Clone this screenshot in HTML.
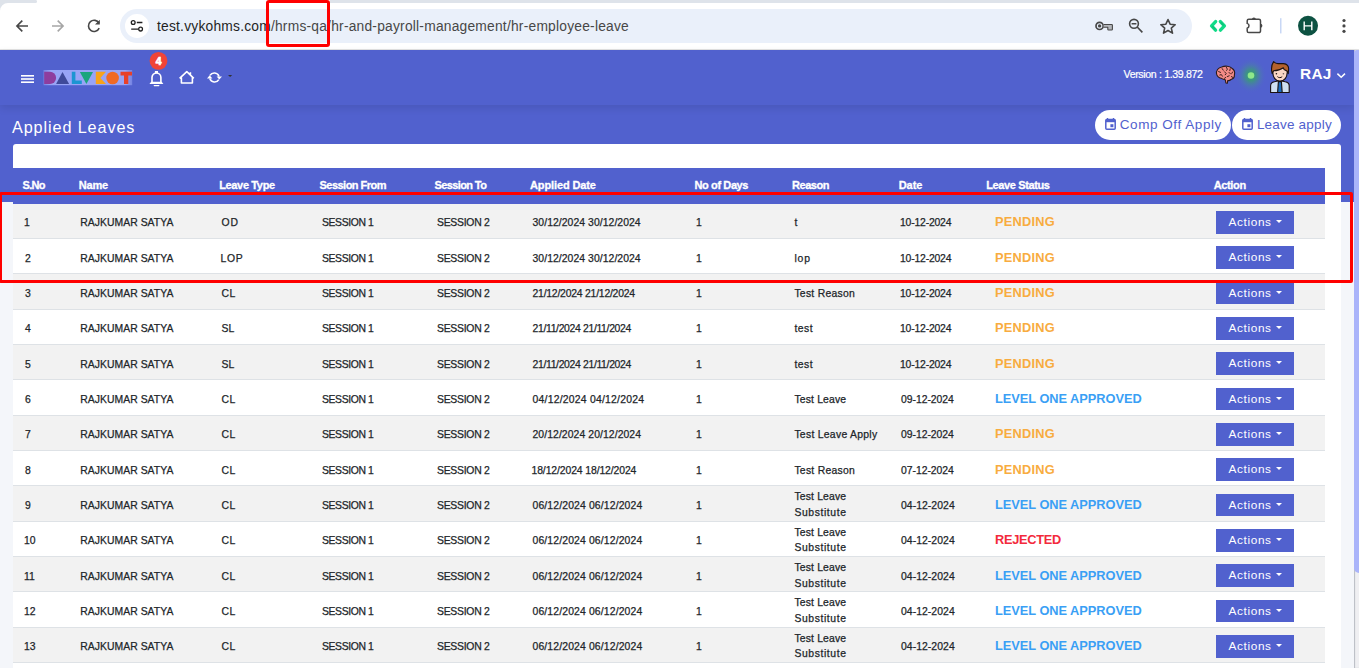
<!DOCTYPE html>
<html><head><meta charset="utf-8">
<style>
*{box-sizing:border-box;margin:0;padding:0}
html,body{width:1359px;height:668px;overflow:hidden;background:#fff;font-family:"Liberation Sans",sans-serif}
body{position:relative}
div,span,svg{position:absolute}
span{white-space:nowrap;line-height:20px}
.h{font-size:11px;font-weight:700;color:#fff;-webkit-text-stroke:.3px #fff}
.c{font-size:10.4px;color:#212529;-webkit-text-stroke:.25px #212529}
.s{font-size:12.8px;font-weight:700}
.b{font-size:11.8px;color:#fff}
.row{left:13px;width:1312px;height:35.33px;border-top:1px solid #dee2e6}
.btn{left:1216px;width:78px;height:22.8px;background:#5161ce}
.caret{left:1276px;width:0;height:0;border-left:3px solid transparent;border-right:3px solid transparent;border-top:3.2px solid #fff}
.redbox{border:3px solid #ff0000;border-radius:3px}
.pill{top:109.9px;height:29.8px;border-radius:15px;background:#fff;color:#5161ce;font-size:13.5px;line-height:29.8px;white-space:nowrap}
</style></head><body>
<div style="left:0;top:0;width:1359px;height:50px;background:#fff"></div>
<svg style="left:0;top:0" width="40" height="12" viewBox="0 0 40 12"><path d="M0 0H36A1.6 1.6 0 0 1 36 3H8A8 8 0 0 0 0 11Z" fill="#dee3ea"/></svg>
<div style="left:330px;top:0;width:1029px;height:3px;background:#dee3ea"></div>
<div style="left:120px;top:9px;width:1072px;height:34px;border-radius:17px;background:#eaf0fa"></div>
<div style="left:125px;top:14px;width:23.8px;height:23.8px;border-radius:50%;background:#fff"></div>
<svg style="position:absolute;left:0;top:0" width="1359" height="50" viewBox="0 0 1359 50">
  <g fill="none" stroke="#474747" stroke-width="1.6" stroke-linecap="butt">
    <path d="M28 26H17.5M22.3 20.6L16.9 26L22.3 31.4"/>
  </g>
  <g fill="none" stroke="#a6a6a6" stroke-width="1.6">
    <path d="M52 26H62.5M57.7 20.6L63.1 26L57.7 31.4"/>
  </g>
  <g fill="none" stroke="#474747" stroke-width="1.6">
    <path d="M99 23.2A5.6 5.6 0 1 0 99.2 28.2"/>
  </g>
  <path d="M99.8 19.8V24.6H95Z" fill="#474747"/>
  <g fill="none" stroke="#1f1f1f" stroke-width="1.3">
    <circle cx="133.2" cy="22.5" r="1.9"/>
    <circle cx="140.6" cy="29.1" r="1.9"/>
    <path d="M136.8 22.5H142.4M131.2 29.1H138.2"/>
  </g>
  <g fill="none" stroke="#474747" stroke-width="1.6">
    <circle cx="1099.6" cy="25.9" r="3.6" stroke-width="1.7"/>
    <circle cx="1134" cy="23.8" r="4.4"/>
    <path d="M1131.6 23.8H1136.4M1137.2 27L1142.4 32.4"/>
    <path d="M1168 19.5L1170.1 24.2L1175.2 24.7L1171.3 28.1L1172.5 33.1L1168 30.5L1163.5 33.1L1164.7 28.1L1160.8 24.7L1165.9 24.2Z" stroke-linejoin="round"/>
  </g>
  <circle cx="1099.6" cy="25.9" r="1.7" fill="#474747"/>
  <path d="M1103.6 24.5H1111.6A.8 .8 0 0 1 1112.4 25.3V29.2A.8 .8 0 0 1 1111.6 30H1108.6A.8 .8 0 0 1 1107.8 29.2V27.2H1103.6" fill="#b4b6ba" stroke="#474747" stroke-width="1.1" stroke-linejoin="round"/>
  <path d="M1215.6 21.6L1211.6 25.8L1215.6 30.1M1220.4 21.6L1224.4 25.8L1220.4 30.1" fill="none" stroke="#12db88" stroke-width="3.4" stroke-linecap="round" stroke-linejoin="round"/>
  <path d="M1212.6 26.6L1215 29M1223.4 25L1221 22.6" fill="none" stroke="#0aa86c" stroke-width="1.6" stroke-linecap="round" opacity=".45"/>
  <path d="M1248.8 19.2H1258.9A1.6 1.6 0 0 1 1260.5 20.8V31A1.6 1.6 0 0 1 1258.9 32.6H1248.8A1.6 1.6 0 0 1 1247.2 31V28.2A2.5 2.5 0 0 0 1247.2 23.4V20.8A1.6 1.6 0 0 1 1248.8 19.2Z" fill="none" stroke="#474747" stroke-width="1.5"/>
  <path d="M1251.9 19.4A2 2 0 0 1 1255.9 19.4Z M1260.4 23.8A2 2 0 0 1 1260.4 27.8Z" fill="#474747"/>
  <rect x="1280" y="18.2" width="1.5" height="15.2" fill="#c8d7f5"/>
  <circle cx="1308" cy="25.8" r="10" fill="#0d5242"/>
  <path d="M1304.2 21.5V30.3M1311.8 21.5V30.3M1304.2 25.9H1311.8" stroke="#fff" stroke-width="1.4" fill="none"/>
  <g fill="#474747"><circle cx="1344" cy="20.5" r="1.6"/><circle cx="1344" cy="25.9" r="1.6"/><circle cx="1344" cy="31.3" r="1.6"/></g>
</svg>
<div style="left:157px;top:16.6px;font-size:13.8px;letter-spacing:.22px;line-height:20px;color:#1f1f1f;white-space:nowrap">test.vykohms.com<span style="position:static;color:#474747;line-height:20px">/hrms-qa/hr-and-payroll-management/hr-employee-leave</span></div>
<div style="left:0;top:49px;width:1359px;height:1px;background:#e3e3e3"></div>

<div style="left:0;top:50px;width:1354px;height:618px;background:#f4f6fa"></div>
<div style="left:0;top:50px;width:1354px;height:151.5px;background:#5161ce"></div>
<div style="left:0;top:50px;width:1354px;height:54.7px;background:#5161ce;box-shadow:0 3px 8px rgba(0,0,0,.1)"></div>
<svg style="position:absolute;left:0;top:50px" width="1354" height="55" viewBox="0 50 1354 55">
  <g fill="#fff"><rect x="21" y="75" width="13" height="1.6"/><rect x="21" y="78.2" width="13" height="1.6"/><rect x="21" y="81.4" width="13" height="1.6"/></g>
  <defs>
    <linearGradient id="lg" x1="0" x2="1"><stop offset="0" stop-color="#98a4f6" stop-opacity=".5"/><stop offset=".08" stop-color="#98a4f6"/><stop offset=".92" stop-color="#98a4f6"/><stop offset="1" stop-color="#98a4f6" stop-opacity=".5"/></linearGradient>
    <radialGradient id="glow"><stop offset="0" stop-color="#34a070" stop-opacity="1"/><stop offset=".3" stop-color="#3a9a7a" stop-opacity=".85"/><stop offset=".62" stop-color="#4a80a6" stop-opacity=".45"/><stop offset="1" stop-color="#5161ce" stop-opacity="0"/></radialGradient>
  </defs>
  <rect x="43.5" y="70" width="88.7" height="15.2" fill="url(#lg)"/>
  <path d="M44.2 71.8H50A6.1 6.1 0 0 1 50 84H44.2Z" fill="#8e3d9e"/>
  <path d="M62.5 72L69.1 84H56.1Z" fill="#3f4a9a"/>
  <path d="M71.8 71.8H75.4V80.4H81.8V84H71.8Z" fill="#1c95d2"/>
  <path d="M79.9 72H93L86.4 84Z" fill="#1aa57e"/>
  <path d="M95.8 71.8H106L100.4 78L106 84H95.8Z" fill="#f8a31a"/>
  <circle cx="112.6" cy="78" r="6.3" fill="#f06a25"/>
  <path d="M120.5 71.8H132V75.4H128.3V84H124V75.4H120.5Z" fill="#e8402a"/>
  <circle cx="158.5" cy="60.85" r="8.9" fill="#f04438"/>
  <text x="158.5" y="64.6" text-anchor="middle" font-family="Liberation Sans" font-weight="700" font-size="10.3" fill="#fff" stroke="#fff" stroke-width=".7">4</text>
  <g fill="none" stroke="#fff" stroke-width="1.6" stroke-linejoin="round">
    <path d="M152 82.4V77.4A4.45 4.45 0 0 1 160.9 77.4V82.4"/>
    <path d="M181.4 77.6V83H192.4V77.6M179.6 78.4L186.8 71.6L193.8 78.4M190.4 74.4V72.2"/>
    <path d="M210 75.4A5 5 0 0 1 219 76.4M218.8 79.6A5 5 0 0 1 209.8 78.6"/>
  </g>
  <path d="M154.9 70.9H158V73.2H154.9Z M151.2 81.8H161.7L163.4 84H149.4Z" fill="#fff"/>
  <path d="M154.2 85.6H158.9" stroke="#fff" stroke-width="1.1" stroke-linecap="round"/>
  <path d="M216.6 76.4H222L219.3 79.6Z M207 78.4H212.4L209.7 75.2Z" fill="#fff"/>
  <path d="M228 75H232.2L230.1 77Z" fill="#333"/>
  <ellipse cx="1251" cy="75.5" rx="16" ry="18" fill="url(#glow)"/>
  <circle cx="1251" cy="75.5" r="3.3" fill="#8ee88a"/>
  <g stroke="#2a1a1a" stroke-width="1.1" stroke-linejoin="round">
    <path d="M1216.6 74.2C1215.8 70.8 1218.2 67.6 1221.8 67C1224.8 65.6 1229.6 65.8 1231.8 68.2C1234.2 69.6 1235 72.6 1234.4 74.8C1234.6 77.4 1233 79 1231 79.5C1230 80.4 1228.6 80.7 1227.7 80.5L1227.3 83.3L1225.9 83L1225.3 79.8C1223.6 79.4 1222 79.1 1221 78.2C1219 78 1217.3 76.6 1216.6 74.2Z" fill="#f28b86"/>
  </g>
  <g stroke="#2a1414" stroke-width=".9" fill="none" stroke-linecap="round">
    <path d="M1222.2 68.6L1223.2 70.2M1226.4 67.4L1227.4 69.2L1226.6 70.4M1230.2 68.8L1229.8 70.6M1218.6 71.6L1220.6 72.4M1224.6 71.8L1226.2 73.6L1225.2 74.8M1229 72.4L1230.6 74M1232.6 72L1231.8 73.4M1219.8 75L1221.4 74.6L1222.4 76.2M1227.4 76.6L1229.2 75.8M1231.4 76.6L1232.8 77.4M1224.4 78.4L1225.8 77.4"/>
  </g>
  <g stroke="#1a1010" stroke-width="1.1" stroke-linejoin="round">
    <path d="M1270.6 92.5V85.8C1270.6 83.6 1272.4 82.2 1274.4 81.8L1278 81H1281.6L1285.2 81.8C1287.4 82.2 1289.2 83.6 1289.2 85.8V92.5Z" fill="#cfe0f2"/>
    <path d="M1278.4 81.6H1281.4L1282.2 92.5H1277.6Z" fill="#1f6fbf"/>
    <path d="M1272.8 68.5C1272.4 77.4 1275.6 81 1280 81C1284.4 81 1287.6 77.4 1287.2 68.5Z" fill="#fad6c4" stroke="none"/><path d="M1272.7 72C1273 77.6 1275.8 81 1280 81C1284.2 81 1287 77.6 1287.3 72" fill="none"/>
    <path d="M1272.2 73.6C1271.2 69.6 1271 65.4 1273.6 61.6C1275 63 1276 63.6 1278 63.6H1283.5C1287 63.6 1289 66.4 1288.6 69.6L1288.2 73.6C1287.6 71.8 1286.8 70.6 1285.8 70.4C1284.2 70.2 1283.6 69 1283.4 67.8C1280.6 69.8 1276.2 70.8 1273.6 70.8C1273 71.6 1272.6 72.6 1272.2 73.6Z" fill="#b3622c"/>
  </g>
  <path d="M1277.4 76.6C1278.6 78 1281 78 1282.2 76.6" stroke="#1a1010" stroke-width="1" fill="none"/>
  <circle cx="1276.4" cy="73.8" r=".8" fill="#1a1010"/><circle cx="1283.4" cy="73.8" r=".8" fill="#6a5a5a"/>
  <path d="M1337.4 73.6L1341.2 77.2L1345 73.6" stroke="#fff" stroke-width="1.5" fill="none"/>
</svg>
<div style="left:1123.5px;top:67.2px;font-size:10.6px;line-height:14px;color:#fff;white-space:nowrap;letter-spacing:-.35px;-webkit-text-stroke:.2px #fff">Version : 1.39.872</div>
<div style="left:1300px;top:64.6px;font-size:15.4px;letter-spacing:.3px;font-weight:700;line-height:18px;color:#fff;white-space:nowrap">RAJ</div>
<div style="left:12px;top:116.4px;font-size:16.2px;letter-spacing:.9px;line-height:22px;color:#fff;white-space:nowrap">Applied Leaves</div>
<div class="pill" style="left:1095px;width:136px;padding-left:24.8px;letter-spacing:.55px">Comp Off Apply</div>
<div class="pill" style="left:1232px;width:109px;padding-left:24.9px;letter-spacing:.2px">Leave apply</div>
<svg style="position:absolute;left:1104.5px;top:117.5px" width="11" height="12" viewBox="0 0 11 12"><path d="M2.5 0V2M8.5 0V2" stroke="#5161ce" stroke-width="1.4"/><rect x=".8" y="1.6" width="9.4" height="9.6" rx="1" fill="none" stroke="#5161ce" stroke-width="1.5"/><rect x=".8" y="1.6" width="9.4" height="2.6" fill="#5161ce"/><rect x="5.4" y="6.2" width="3" height="3" fill="#5161ce"/></svg>
<svg style="position:absolute;left:1241.5px;top:117.5px" width="11" height="12" viewBox="0 0 11 12"><path d="M2.5 0V2M8.5 0V2" stroke="#5161ce" stroke-width="1.4"/><rect x=".8" y="1.6" width="9.4" height="9.6" rx="1" fill="none" stroke="#5161ce" stroke-width="1.5"/><rect x=".8" y="1.6" width="9.4" height="2.6" fill="#5161ce"/><rect x="5.4" y="6.2" width="3" height="3" fill="#5161ce"/></svg>
<div style="left:13px;top:144px;width:1328px;height:600px;background:#fff;border-radius:3px"></div>
<div class="row" style="top:202.67px;background:#f2f2f2"></div><span class="c" style="left:24.00px;top:213.37px">1</span><span class="c" style="left:80.25px;top:213.37px;letter-spacing:0.038px">RAJKUMAR SATYA</span><span class="c" style="left:221.50px;top:213.37px;letter-spacing:1.000px">OD</span><span class="c" style="left:322.00px;top:213.37px;letter-spacing:-0.375px">SESSION 1</span><span class="c" style="left:437.00px;top:213.37px;letter-spacing:-0.250px">SESSION 2</span><span class="c" style="left:532.50px;top:213.37px;letter-spacing:0.062px">30/12/2024 30/12/2024</span><span class="c" style="left:696.00px;top:213.37px">1</span><span class="c" style="left:900.00px;top:213.37px;letter-spacing:-0.189px">10-12-2024</span><span class="c" style="left:794.40px;top:213.37px">t</span><span class="s" style="left:995.00px;top:212.27px;letter-spacing:0.250px;color:#f8ac3f">PENDING</span><div class="btn" style="top:211.00px"></div><span class="b" style="left:1228.50px;top:211.87px;letter-spacing:0.633px">Actions</span><div class="caret" style="top:219.87px"></div><div class="row" style="top:238.00px;background:#fff"></div><span class="c" style="left:25.00px;top:248.70px">2</span><span class="c" style="left:80.25px;top:248.70px;letter-spacing:0.038px">RAJKUMAR SATYA</span><span class="c" style="left:220.50px;top:248.70px;letter-spacing:0.750px">LOP</span><span class="c" style="left:322.00px;top:248.70px;letter-spacing:-0.375px">SESSION 1</span><span class="c" style="left:437.00px;top:248.70px;letter-spacing:-0.250px">SESSION 2</span><span class="c" style="left:532.50px;top:248.70px;letter-spacing:0.062px">30/12/2024 30/12/2024</span><span class="c" style="left:696.00px;top:248.70px">1</span><span class="c" style="left:900.00px;top:248.70px;letter-spacing:-0.189px">10-12-2024</span><span class="c" style="left:794.40px;top:248.70px;letter-spacing:0.875px">lop</span><span class="s" style="left:995.00px;top:247.60px;letter-spacing:0.250px;color:#f8ac3f">PENDING</span><div class="btn" style="top:246.33px"></div><span class="b" style="left:1228.50px;top:247.20px;letter-spacing:0.633px">Actions</span><div class="caret" style="top:255.20px"></div><div class="row" style="top:273.33px;background:#f2f2f2"></div><span class="c" style="left:25.00px;top:284.03px">3</span><span class="c" style="left:80.25px;top:284.03px;letter-spacing:0.038px">RAJKUMAR SATYA</span><span class="c" style="left:221.50px;top:284.03px;letter-spacing:0.400px">CL</span><span class="c" style="left:322.00px;top:284.03px;letter-spacing:-0.375px">SESSION 1</span><span class="c" style="left:437.00px;top:284.03px;letter-spacing:-0.250px">SESSION 2</span><span class="c" style="left:532.50px;top:284.03px;letter-spacing:-0.215px">21/12/2024 21/12/2024</span><span class="c" style="left:696.00px;top:284.03px">1</span><span class="c" style="left:900.00px;top:284.03px;letter-spacing:-0.189px">10-12-2024</span><span class="c" style="left:794.40px;top:284.03px;letter-spacing:0.260px">Test Reason</span><span class="s" style="left:995.00px;top:282.93px;letter-spacing:0.250px;color:#f8ac3f">PENDING</span><div class="btn" style="top:281.66px"></div><span class="b" style="left:1228.50px;top:282.53px;letter-spacing:0.633px">Actions</span><div class="caret" style="top:290.53px"></div><div class="row" style="top:308.66px;background:#fff"></div><span class="c" style="left:25.00px;top:319.36px">4</span><span class="c" style="left:80.25px;top:319.36px;letter-spacing:0.038px">RAJKUMAR SATYA</span><span class="c" style="left:221.50px;top:319.36px">SL</span><span class="c" style="left:322.00px;top:319.36px;letter-spacing:-0.375px">SESSION 1</span><span class="c" style="left:437.00px;top:319.36px;letter-spacing:-0.250px">SESSION 2</span><span class="c" style="left:532.50px;top:319.36px;letter-spacing:-0.330px">21/11/2024 21/11/2024</span><span class="c" style="left:696.00px;top:319.36px">1</span><span class="c" style="left:900.00px;top:319.36px;letter-spacing:-0.189px">10-12-2024</span><span class="c" style="left:794.40px;top:319.36px;letter-spacing:0.533px">test</span><span class="s" style="left:995.00px;top:318.26px;letter-spacing:0.250px;color:#f8ac3f">PENDING</span><div class="btn" style="top:316.99px"></div><span class="b" style="left:1228.50px;top:317.86px;letter-spacing:0.633px">Actions</span><div class="caret" style="top:325.86px"></div><div class="row" style="top:343.99px;background:#f2f2f2"></div><span class="c" style="left:25.00px;top:354.69px">5</span><span class="c" style="left:80.25px;top:354.69px;letter-spacing:0.038px">RAJKUMAR SATYA</span><span class="c" style="left:221.50px;top:354.69px">SL</span><span class="c" style="left:322.00px;top:354.69px;letter-spacing:-0.375px">SESSION 1</span><span class="c" style="left:437.00px;top:354.69px;letter-spacing:-0.250px">SESSION 2</span><span class="c" style="left:532.50px;top:354.69px;letter-spacing:-0.330px">21/11/2024 21/11/2024</span><span class="c" style="left:696.00px;top:354.69px">1</span><span class="c" style="left:900.00px;top:354.69px;letter-spacing:-0.189px">10-12-2024</span><span class="c" style="left:794.40px;top:354.69px;letter-spacing:0.533px">test</span><span class="s" style="left:995.00px;top:353.59px;letter-spacing:0.250px;color:#f8ac3f">PENDING</span><div class="btn" style="top:352.32px"></div><span class="b" style="left:1228.50px;top:353.19px;letter-spacing:0.633px">Actions</span><div class="caret" style="top:361.19px"></div><div class="row" style="top:379.32px;background:#fff"></div><span class="c" style="left:25.00px;top:390.02px">6</span><span class="c" style="left:80.25px;top:390.02px;letter-spacing:0.038px">RAJKUMAR SATYA</span><span class="c" style="left:221.50px;top:390.02px;letter-spacing:0.400px">CL</span><span class="c" style="left:322.00px;top:390.02px;letter-spacing:-0.375px">SESSION 1</span><span class="c" style="left:437.00px;top:390.02px;letter-spacing:-0.250px">SESSION 2</span><span class="c" style="left:532.50px;top:390.02px;letter-spacing:0.230px">04/12/2024 04/12/2024</span><span class="c" style="left:696.00px;top:390.02px">1</span><span class="c" style="left:901.00px;top:390.02px;letter-spacing:-0.033px">09-12-2024</span><span class="c" style="left:794.40px;top:390.02px;letter-spacing:0.167px">Test Leave</span><span class="s" style="left:995.00px;top:388.92px;letter-spacing:-0.029px;color:#3a9ff5">LEVEL ONE APPROVED</span><div class="btn" style="top:387.65px"></div><span class="b" style="left:1228.50px;top:388.52px;letter-spacing:0.633px">Actions</span><div class="caret" style="top:396.52px"></div><div class="row" style="top:414.65px;background:#f2f2f2"></div><span class="c" style="left:25.00px;top:425.35px">7</span><span class="c" style="left:80.25px;top:425.35px;letter-spacing:0.038px">RAJKUMAR SATYA</span><span class="c" style="left:221.50px;top:425.35px;letter-spacing:0.400px">CL</span><span class="c" style="left:322.00px;top:425.35px;letter-spacing:-0.375px">SESSION 1</span><span class="c" style="left:437.00px;top:425.35px;letter-spacing:-0.250px">SESSION 2</span><span class="c" style="left:532.50px;top:425.35px;letter-spacing:0.080px">20/12/2024 20/12/2024</span><span class="c" style="left:696.00px;top:425.35px">1</span><span class="c" style="left:901.00px;top:425.35px;letter-spacing:-0.033px">09-12-2024</span><span class="c" style="left:794.40px;top:425.35px;letter-spacing:0.280px">Test Leave Apply</span><span class="s" style="left:995.00px;top:424.25px;letter-spacing:0.250px;color:#f8ac3f">PENDING</span><div class="btn" style="top:422.98px"></div><span class="b" style="left:1228.50px;top:423.85px;letter-spacing:0.633px">Actions</span><div class="caret" style="top:431.85px"></div><div class="row" style="top:449.98px;background:#fff"></div><span class="c" style="left:25.00px;top:460.68px">8</span><span class="c" style="left:80.25px;top:460.68px;letter-spacing:0.038px">RAJKUMAR SATYA</span><span class="c" style="left:221.50px;top:460.68px;letter-spacing:0.400px">CL</span><span class="c" style="left:322.00px;top:460.68px;letter-spacing:-0.375px">SESSION 1</span><span class="c" style="left:437.00px;top:460.68px;letter-spacing:-0.250px">SESSION 2</span><span class="c" style="left:531.50px;top:460.68px;letter-spacing:-0.100px">18/12/2024 18/12/2024</span><span class="c" style="left:696.00px;top:460.68px">1</span><span class="c" style="left:901.00px;top:460.68px;letter-spacing:-0.033px">07-12-2024</span><span class="c" style="left:794.40px;top:460.68px;letter-spacing:0.260px">Test Reason</span><span class="s" style="left:995.00px;top:459.58px;letter-spacing:0.250px;color:#f8ac3f">PENDING</span><div class="btn" style="top:458.31px"></div><span class="b" style="left:1228.50px;top:459.18px;letter-spacing:0.633px">Actions</span><div class="caret" style="top:467.18px"></div><div class="row" style="top:485.31px;background:#f2f2f2"></div><span class="c" style="left:25.00px;top:496.01px">9</span><span class="c" style="left:80.25px;top:496.01px;letter-spacing:0.038px">RAJKUMAR SATYA</span><span class="c" style="left:221.50px;top:496.01px;letter-spacing:0.400px">CL</span><span class="c" style="left:322.00px;top:496.01px;letter-spacing:-0.375px">SESSION 1</span><span class="c" style="left:437.00px;top:496.01px;letter-spacing:-0.250px">SESSION 2</span><span class="c" style="left:532.50px;top:496.01px;letter-spacing:0.140px">06/12/2024 06/12/2024</span><span class="c" style="left:696.00px;top:496.01px">1</span><span class="c" style="left:901.00px;top:496.01px;letter-spacing:0.056px">04-12-2024</span><span class="c" style="left:794.40px;top:489.46px;letter-spacing:0.167px;line-height:15.7px">Test Leave</span><span class="c" style="left:794.40px;top:505.16px;letter-spacing:0.600px;line-height:15.7px">Substitute</span><span class="s" style="left:995.00px;top:494.91px;letter-spacing:-0.029px;color:#3a9ff5">LEVEL ONE APPROVED</span><div class="btn" style="top:493.64px"></div><span class="b" style="left:1228.50px;top:494.51px;letter-spacing:0.633px">Actions</span><div class="caret" style="top:502.51px"></div><div class="row" style="top:520.64px;background:#fff"></div><span class="c" style="left:24.00px;top:531.34px">10</span><span class="c" style="left:80.25px;top:531.34px;letter-spacing:0.038px">RAJKUMAR SATYA</span><span class="c" style="left:221.50px;top:531.34px;letter-spacing:0.400px">CL</span><span class="c" style="left:322.00px;top:531.34px;letter-spacing:-0.375px">SESSION 1</span><span class="c" style="left:437.00px;top:531.34px;letter-spacing:-0.250px">SESSION 2</span><span class="c" style="left:532.50px;top:531.34px;letter-spacing:0.140px">06/12/2024 06/12/2024</span><span class="c" style="left:696.00px;top:531.34px">1</span><span class="c" style="left:901.00px;top:531.34px;letter-spacing:0.056px">04-12-2024</span><span class="c" style="left:794.40px;top:524.79px;letter-spacing:0.167px;line-height:15.7px">Test Leave</span><span class="c" style="left:794.40px;top:540.49px;letter-spacing:0.600px;line-height:15.7px">Substitute</span><span class="s" style="left:995.00px;top:530.24px;letter-spacing:-0.286px;color:#f32a3c">REJECTED</span><div class="btn" style="top:528.97px"></div><span class="b" style="left:1228.50px;top:529.84px;letter-spacing:0.633px">Actions</span><div class="caret" style="top:537.84px"></div><div class="row" style="top:555.97px;background:#f2f2f2"></div><span class="c" style="left:24.00px;top:566.67px">11</span><span class="c" style="left:80.25px;top:566.67px;letter-spacing:0.038px">RAJKUMAR SATYA</span><span class="c" style="left:221.50px;top:566.67px;letter-spacing:0.400px">CL</span><span class="c" style="left:322.00px;top:566.67px;letter-spacing:-0.375px">SESSION 1</span><span class="c" style="left:437.00px;top:566.67px;letter-spacing:-0.250px">SESSION 2</span><span class="c" style="left:532.50px;top:566.67px;letter-spacing:0.140px">06/12/2024 06/12/2024</span><span class="c" style="left:696.00px;top:566.67px">1</span><span class="c" style="left:901.00px;top:566.67px;letter-spacing:0.056px">04-12-2024</span><span class="c" style="left:794.40px;top:560.12px;letter-spacing:0.167px;line-height:15.7px">Test Leave</span><span class="c" style="left:794.40px;top:575.82px;letter-spacing:0.600px;line-height:15.7px">Substitute</span><span class="s" style="left:995.00px;top:565.57px;letter-spacing:-0.029px;color:#3a9ff5">LEVEL ONE APPROVED</span><div class="btn" style="top:564.30px"></div><span class="b" style="left:1228.50px;top:565.17px;letter-spacing:0.633px">Actions</span><div class="caret" style="top:573.17px"></div><div class="row" style="top:591.30px;background:#fff"></div><span class="c" style="left:24.00px;top:602.00px">12</span><span class="c" style="left:80.25px;top:602.00px;letter-spacing:0.038px">RAJKUMAR SATYA</span><span class="c" style="left:221.50px;top:602.00px;letter-spacing:0.400px">CL</span><span class="c" style="left:322.00px;top:602.00px;letter-spacing:-0.375px">SESSION 1</span><span class="c" style="left:437.00px;top:602.00px;letter-spacing:-0.250px">SESSION 2</span><span class="c" style="left:532.50px;top:602.00px;letter-spacing:0.140px">06/12/2024 06/12/2024</span><span class="c" style="left:696.00px;top:602.00px">1</span><span class="c" style="left:901.00px;top:602.00px;letter-spacing:0.056px">04-12-2024</span><span class="c" style="left:794.40px;top:595.45px;letter-spacing:0.167px;line-height:15.7px">Test Leave</span><span class="c" style="left:794.40px;top:611.15px;letter-spacing:0.600px;line-height:15.7px">Substitute</span><span class="s" style="left:995.00px;top:600.90px;letter-spacing:-0.029px;color:#3a9ff5">LEVEL ONE APPROVED</span><div class="btn" style="top:599.63px"></div><span class="b" style="left:1228.50px;top:600.50px;letter-spacing:0.633px">Actions</span><div class="caret" style="top:608.50px"></div><div class="row" style="top:626.63px;background:#f2f2f2"></div><span class="c" style="left:24.00px;top:637.33px">13</span><span class="c" style="left:80.25px;top:637.33px;letter-spacing:0.038px">RAJKUMAR SATYA</span><span class="c" style="left:221.50px;top:637.33px;letter-spacing:0.400px">CL</span><span class="c" style="left:322.00px;top:637.33px;letter-spacing:-0.375px">SESSION 1</span><span class="c" style="left:437.00px;top:637.33px;letter-spacing:-0.250px">SESSION 2</span><span class="c" style="left:532.50px;top:637.33px;letter-spacing:0.140px">06/12/2024 06/12/2024</span><span class="c" style="left:696.00px;top:637.33px">1</span><span class="c" style="left:901.00px;top:637.33px;letter-spacing:0.056px">04-12-2024</span><span class="c" style="left:794.40px;top:630.78px;letter-spacing:0.167px;line-height:15.7px">Test Leave</span><span class="c" style="left:794.40px;top:646.48px;letter-spacing:0.600px;line-height:15.7px">Substitute</span><span class="s" style="left:995.00px;top:636.23px;letter-spacing:-0.029px;color:#3a9ff5">LEVEL ONE APPROVED</span><div class="btn" style="top:634.96px"></div><span class="b" style="left:1228.50px;top:635.83px;letter-spacing:0.633px">Actions</span><div class="caret" style="top:643.83px"></div><div class="row" style="top:661.96px;background:#fff"></div>
<div style="left:13px;top:168px;width:1312px;height:35.5px;background:#5161ce"></div>
<span class="h" style="left:22.50px;top:175.00px;letter-spacing:-0.667px">S.No</span><span class="h" style="left:78.75px;top:175.00px;letter-spacing:-0.167px">Name</span><span class="h" style="left:219.25px;top:175.00px;letter-spacing:-0.361px">Leave Type</span><span class="h" style="left:319.50px;top:175.00px;letter-spacing:-0.523px">Session From</span><span class="h" style="left:434.50px;top:175.00px;letter-spacing:-0.611px">Session To</span><span class="h" style="left:530.00px;top:175.00px;letter-spacing:-0.114px">Applied Date</span><span class="h" style="left:694.50px;top:175.00px;letter-spacing:-0.389px">No of Days</span><span class="h" style="left:792.00px;top:175.00px;letter-spacing:-0.450px">Reason</span><span class="h" style="left:898.75px;top:175.00px;letter-spacing:-0.083px">Date</span><span class="h" style="left:986.25px;top:175.00px;letter-spacing:-0.386px">Leave Status</span><span class="h" style="left:1213.70px;top:175.00px;letter-spacing:-0.360px">Action</span>
<div style="left:1354px;top:50px;width:5px;height:618px;background:#efeff2;box-shadow:inset 1px 0 1px #b9bcc4"></div>
<div style="left:1354px;top:50px;width:5px;height:523px;background:#aab4fa;border-radius:3px 0 0 5px"></div>
<div class="redbox" style="left:266px;top:0;width:64px;height:46.6px"></div>
<div class="redbox" style="left:-1px;top:192px;width:1354px;height:90.8px;border-width:3px;border-radius:2px"></div>
</body></html>
